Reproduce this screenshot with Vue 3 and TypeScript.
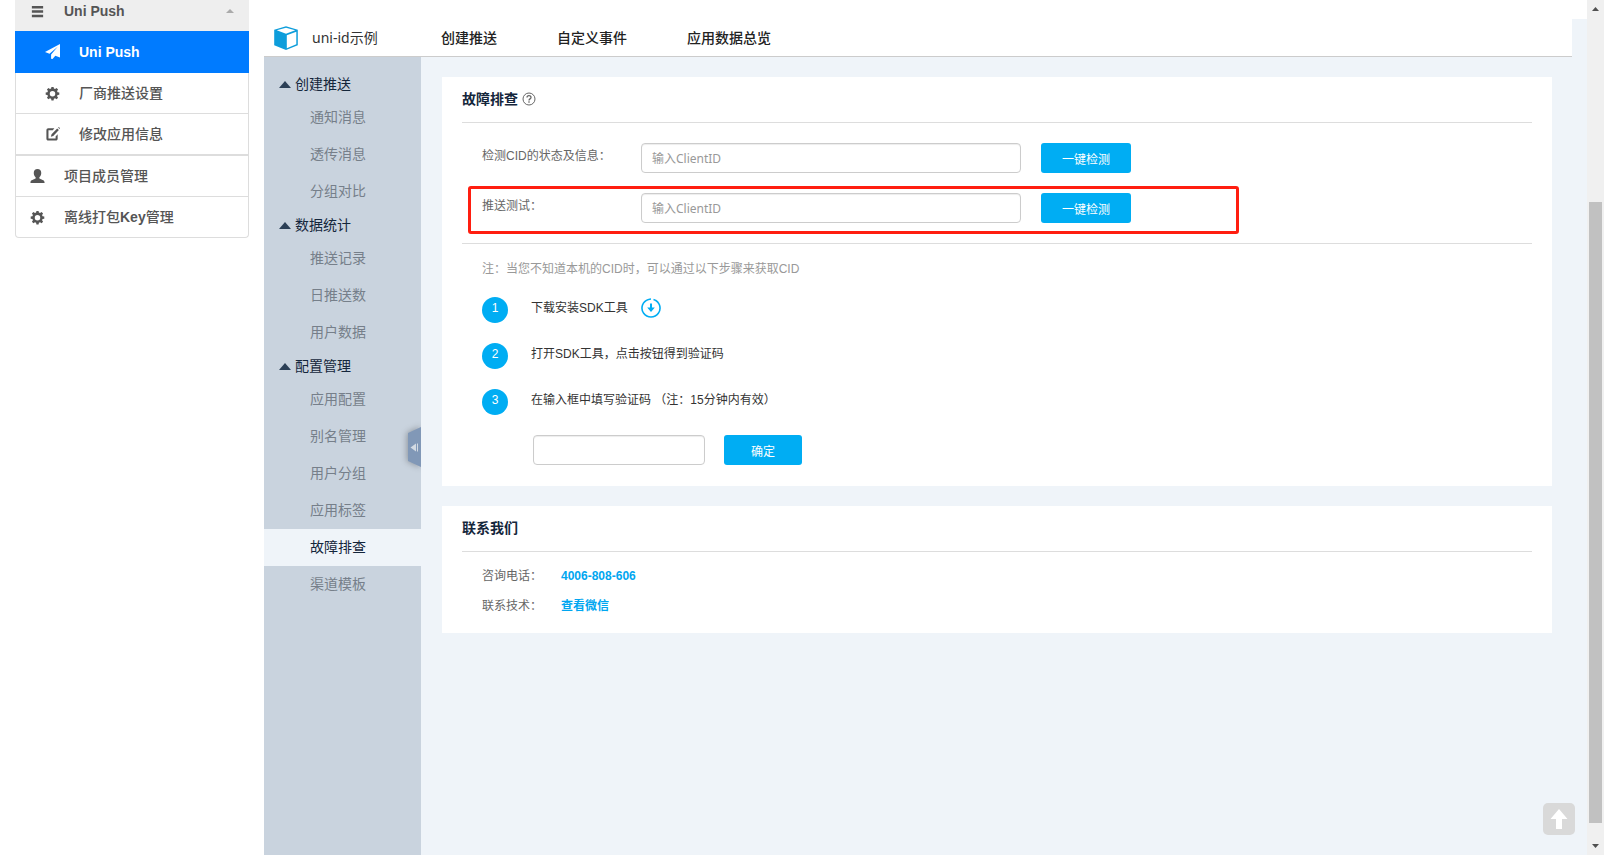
<script setup lang="ts">
import { ref } from 'vue'

interface NavGroup {
  title: string
  items: string[]
}

const gearPath =
  'M6.8 1h2.4l.4 1.9 1.3.6 1.7-1.1 1.7 1.7-1.1 1.7.5 1.3 2 .4v2.4l-2 .4-.5 1.3 1.1 1.7-1.7 1.7-1.7-1.1-1.3.6-.4 1.9H6.8l-.4-1.9-1.3-.6-1.7 1.1-1.7-1.7 1.1-1.7-.5-1.3-2-.4V7.500l2-.4.5-1.300-1.100-1.700 1.700-1.700 1.700 1.100 1.300-.6zM8 5.600a3.100 3.100 0 1 0 0 6.200 3.100 3.100 0 0 0 0-6.200z'

const groups: NavGroup[] = [
  { title: '创建推送', items: ['通知消息', '透传消息', '分组对比'] },
  { title: '数据统计', items: ['推送记录', '日推送数', '用户数据'] },
  {
    title: '配置管理',
    items: ['应用配置', '别名管理', '用户分组', '应用标签', '故障排查', '渠道模板'],
  },
]
const tabs = ['创建推送', '自定义事件', '应用数据总览']
const current = ref('故障排查')
const clientId = ref('')
const pushClientId = ref('')
const code = ref('')
</script>

<template>
  <div class="page">
    <aside class="menu">
      <a class="menu-head" href="#">
        <svg class="icon" viewBox="0 0 16 16"><path d="M2 2h12v2.700H2zM2 6.700h12v2.700H2zM2 11.400h12v2.700H2z" /></svg>
        <span>Uni Push</span>
        <i class="caret"></i>
      </a>
      <a class="menu-item sub active" href="#">
        <svg class="icon" viewBox="0 0 16 16"><path d="M16 0v14.500l-5-2L8 16l-1.500-.3v-4.400L13.500 3 4.800 10.400 0 8.500z" /></svg>
        <span>Uni Push</span>
      </a>
      <a class="menu-item sub" href="#">
        <svg class="icon" viewBox="0 0 16 17"><path :d="gearPath" fill-rule="evenodd" /></svg>
        <span>厂商推送设置</span>
      </a>
      <a class="menu-item sub last-sub" href="#">
        <svg class="icon" viewBox="0 0 16 16">
          <path d="M10 1.300 8.300 3.500H3.700v8.800h7.600V10l2.200-2.200v4.700c0 1.200-.8 2-2 2h-8c-1.200 0-2-.8-2-2v-9c0-1.200.8-2.200 2-2.200z" />
          <path d="m13 1.500 1.800 1.800-6 6.200-2.600.8.800-2.600zM14 .600l.8-.6 1.200 1.200-.6.8z" />
        </svg>
        <span>修改应用信息</span>
      </a>
      <a class="menu-item" href="#">
        <svg class="icon" viewBox="0 0 16 16"><path d="M8 0c2.500 0 4 1.600 4 4.200 0 2-.9 3.700-2 4.500v1.500c1.800 1.100 5.500 1.700 5.500 3.800v1H.5v-1c0-2.100 3.700-2.700 5.500-3.800V8.700C4.900 7.900 4 6.200 4 4.200 4 1.600 5.500 0 8 0z" /></svg>
        <span>项目成员管理</span>
      </a>
      <a class="menu-item last" href="#">
        <svg class="icon" viewBox="0 0 16 17"><path :d="gearPath" fill-rule="evenodd" /></svg>
        <span>离线打包<b>Key</b>管理</span>
      </a>
    </aside>

    <div class="console">
      <div class="top-gap"></div>
      <header class="topbar">
        <svg class="logo" viewBox="0 0 24 24">
          <path d="M12 .2 23.800 3.700v15.600L12 24 .2 19.300V3.700z" fill="#0d9ddb" />
          <path d="M12 1.700 21.200 4.300 12 7.700 2.800 4.300z" fill="#fff" />
          <path d="M12.800 9.200 22.300 5.700v12.600l-9.500 3.900z" fill="#fff" />
        </svg>
        <span class="app-name">uni-id示例</span>
        <nav class="tabs">
          <a v-for="t in tabs" :key="t" href="#">{{ t }}</a>
        </nav>
      </header>

      <div class="body">
        <nav class="side">
          <section v-for="g in groups" :key="g.title">
            <h3><i class="tri"></i>{{ g.title }}</h3>
            <a
              v-for="item in g.items"
              :key="item"
              href="#"
              :class="{ on: item === current }"
              @click.prevent="current = item"
            >{{ item }}</a>
          </section>
          <button class="handle" type="button" aria-label="收起">
            <svg viewBox="0 0 13 40">
              <path d="M0 6 13 0v40L0 34z" fill="#8198b7" />
              <path d="M8 16.500v8L2.500 20.500zM9 16.500h1v8H9z" fill="#d3dae2" />
            </svg>
          </button>
        </nav>

        <main class="main">
          <section class="card">
            <h2>
              故障排查
              <svg class="help" viewBox="0 0 14 14" fill="none" stroke="#666">
                <circle cx="7" cy="7" r="6" />
                <path d="M5 5.600C5 3 9 3 9 5.500c0 1.400-2 1.400-2 2.900M7 9.300v1.400" stroke-width="1.300" />
              </svg>
            </h2>
            <div class="checks">
              <div class="check">
                <label for="cid">检测CID的状态及信息：</label>
                <input id="cid" v-model="clientId" type="text" placeholder="输入ClientID" />
                <button class="btn" type="button">一键检测</button>
              </div>
              <div class="check marked">
                <label for="push">推送测试：</label>
                <input id="push" v-model="pushClientId" type="text" placeholder="输入ClientID" />
                <button class="btn" type="button">一键检测</button>
              </div>
            </div>
            <div class="guide">
              <p class="note">注：当您不知道本机的CID时，可以通过以下步骤来获取CID</p>
              <ol>
                <li>
                  <b>1</b><span>下载安装SDK工具</span>
                  <a class="download" href="#" aria-label="下载">
                    <svg viewBox="0 0 20 20" fill="none" stroke="#00adf3">
                      <path d="M12.500 1.400A9 9 0 1 1 7.500 1.400M7.500 1.400A9 9 0 0 1 10 1M14.500 2.200A9 9 0 0 1 18 5.900" stroke-width="1.600" />
                      <path d="M10 5.500V11" stroke-width="2" />
                      <path d="M6.200 9.500h7.600L10 14z" fill="#00adf3" stroke="none" />
                    </svg>
                  </a>
                </li>
                <li><b>2</b><span>打开SDK工具，点击按钮得到验证码</span></li>
                <li><b>3</b><label for="code">在输入框中填写验证码 （注：15分钟内有效）</label></li>
              </ol>
              <div class="confirm">
                <input id="code" v-model="code" type="text" />
                <button class="btn small" type="button">确定</button>
              </div>
            </div>
          </section>

          <section class="card">
            <h2>联系我们</h2>
            <dl>
              <dt>咨询电话：</dt>
              <dd>4006-808-606</dd>
              <dt>联系技术：</dt>
              <dd><a href="#">查看微信</a></dd>
            </dl>
          </section>
        </main>
      </div>
    </div>

    <button class="to-top" type="button" aria-label="返回顶部">
      <svg viewBox="0 0 32 32"><path d="M16 6 24.500 16H19v10h-6V16H7.500z" fill="#fff" /></svg>
    </button>

    <div class="scroll">
      <svg viewBox="0 0 7 4"><path d="M0 4 3.500 0 7 4z" fill="#505050" /></svg>
      <div class="track"><div class="thumb"></div></div>
      <svg viewBox="0 0 7 4"><path d="M0 0h7L3.500 4z" fill="#505050" /></svg>
    </div>
  </div>
</template>

<style>
body {
  margin: 0;
  background: #fff;
}
</style>

<style scoped>
.page {
  display: flex;
  min-height: 100vh;
  font: 12px/20px "Liberation Sans", "Noto Sans CJK SC", sans-serif;
  color: #333;
}
.page *,
.page *::after {
  box-sizing: border-box;
}
a {
  color: inherit;
  text-decoration: none;
}

.menu {
  flex: 0 0 264px;
  padding: 0 15px;
  font-size: 14px;
  font-weight: 500;
  color: #555;
}
.menu-head,
.menu-item {
  display: flex;
  align-items: center;
  gap: 19px;
  padding: 0 15px;
}
.menu-head {
  height: 31px;
  padding-bottom: 9px;
  background: #eee;
  font-weight: 600;
}
.menu-item {
  height: 41px;
  border: 1px solid #ddd;
  border-top: 0;
  padding-left: 14px;
}
.menu-item.sub {
  padding-left: 29px;
}
.menu-item.active {
  height: 42px;
  border-color: #007bff;
  background: #007bff;
  color: #fff;
  font-weight: 600;
}
.menu-item.last-sub {
  height: 42px;
  border-bottom-width: 2px;
}
.menu-item.last {
  border-radius: 0 0 4px 4px;
}
.icon {
  flex: none;
  width: 15px;
  height: 15px;
  fill: currentColor;
}
.caret {
  margin-left: auto;
  border: 4px solid transparent;
  border-top: 0;
  border-bottom-color: #aaa;
}

.console {
  flex: 1;
  min-width: 0;
  display: flex;
  flex-direction: column;
  background: #eff4f9;
}
.top-gap {
  height: 19px;
  background: #fff;
}
.topbar {
  display: flex;
  align-items: center;
  height: 38px;
  margin-right: 15px;
  padding-left: 10px;
  border-bottom: 1px solid #ccc;
  background: #fff;
  font-size: 14px;
}
.logo {
  width: 24px;
  height: 24px;
}
.app-name {
  width: 129px;
  margin-left: 14px;
  font-family: "Noto Sans", "Noto Sans CJK SC", sans-serif;
}
.tabs {
  display: flex;
  gap: 60px;
  font-weight: 500;
  color: #222;
}
.body {
  flex: 1;
  display: flex;
}

.side {
  position: relative;
  flex: 0 0 157px;
  padding-top: 12px;
  background: #c9d3de;
  font-size: 14px;
}
.side h3 {
  display: flex;
  align-items: center;
  gap: 4px;
  height: 30px;
  margin: 0;
  padding-left: 15px;
  font-size: 14px;
  font-weight: 400;
  color: #14263b;
}
.tri {
  border: 6px solid transparent;
  border-top: 0;
  border-bottom: 7px solid #2c4057;
}
.side a {
  display: block;
  padding-left: 46px;
  line-height: 37px;
  color: #767f8a;
}
.side a.on {
  background: #eff4f9;
  color: #14263b;
}
.handle {
  position: absolute;
  top: 370px;
  right: 0;
  width: 13px;
  height: 40px;
  padding: 0;
  border: 0;
  background: none;
  filter: drop-shadow(-1px 0 3px rgba(0, 0, 0, 0.3));
  clip-path: inset(-8px 0 -8px -8px);
}
.handle svg,
.to-top svg,
.download svg {
  display: block;
}

.main {
  flex: 1;
  min-width: 0;
  display: flex;
  flex-direction: column;
  gap: 20px;
  padding: 20px 35px 20px 21px;
}
.card {
  padding: 0 20px;
  background: #fff;
}
.card h2 {
  display: flex;
  align-items: center;
  gap: 4px;
  height: 46px;
  margin: 0;
  padding-bottom: 2px;
  border-bottom: 1px solid #ddd;
  font-size: 14px;
  font-weight: 600;
  color: #14263b;
}
.help {
  width: 14px;
  height: 14px;
}
.checks {
  display: flex;
  flex-direction: column;
  gap: 20px;
  padding: 20px;
  border-bottom: 1px solid #ddd;
}
.check {
  position: relative;
  display: flex;
  gap: 20px;
}
.check label {
  width: 139px;
  line-height: 26px;
  color: #666;
}
.marked::after {
  content: "";
  position: absolute;
  top: -7px;
  left: -14px;
  width: 771px;
  height: 48px;
  border: 3px solid #ff1e10;
  border-radius: 3px;
  pointer-events: none;
}
input {
  width: 380px;
  height: 30px;
  padding: 0 10px;
  border: 1px solid #ccc;
  border-radius: 4px;
  background: #fff;
  box-shadow: inset 0 1px 1px rgba(0, 0, 0, 0.075);
  font: 12px "Noto Sans", "Noto Sans CJK SC", sans-serif;
  color: #555;
}
input::placeholder {
  color: #999;
}
.btn {
  width: 90px;
  height: 30px;
  padding: 0;
  border: 0;
  border-radius: 3px;
  background: #00adf3;
  font: 12px "Liberation Sans", "Noto Sans CJK SC", sans-serif;
  color: #fff;
}
.guide {
  padding: 15px 20px 21px;
}
.note {
  margin: 0;
  color: #999;
}
ol {
  display: grid;
  gap: 20px;
  margin: 18px 0 20px;
  padding: 0;
  list-style: none;
}
li {
  display: flex;
  height: 26px;
  line-height: 22px;
}
li b {
  width: 26px;
  margin-right: 23px;
  border-radius: 50%;
  background: #00adf3;
  font-weight: 400;
  text-align: center;
  color: #fff;
}
.download {
  width: 20px;
  height: 20px;
  margin: 1px 0 0 13px;
}
.confirm {
  display: flex;
  gap: 19px;
  padding-left: 51px;
}
.confirm input {
  width: 172px;
}
.btn.small {
  width: 78px;
}
dl {
  display: grid;
  grid-template-columns: 79px 1fr;
  margin: 0;
  padding: 9px 20px 12px;
  line-height: 30px;
  color: #666;
}
dd {
  margin: 0;
  font-weight: 600;
  color: #00a6f0;
}

.to-top {
  position: fixed;
  right: 29px;
  bottom: 20px;
  width: 32px;
  height: 32px;
  padding: 0;
  border: 0;
  border-radius: 5px;
  background: #d9d9d9;
}
.scroll {
  flex: 0 0 17px;
  display: flex;
  flex-direction: column;
  align-items: center;
  padding: 7px 0;
  background: #f0f0f0;
}
.scroll svg {
  width: 7px;
  height: 4px;
}
.track {
  flex: 1;
  display: flex;
  flex-direction: column;
  justify-content: flex-end;
  padding-bottom: 21px;
}
.thumb {
  width: 13px;
  height: 76.5%;
  background: #c1c1c1;
}
</style>
